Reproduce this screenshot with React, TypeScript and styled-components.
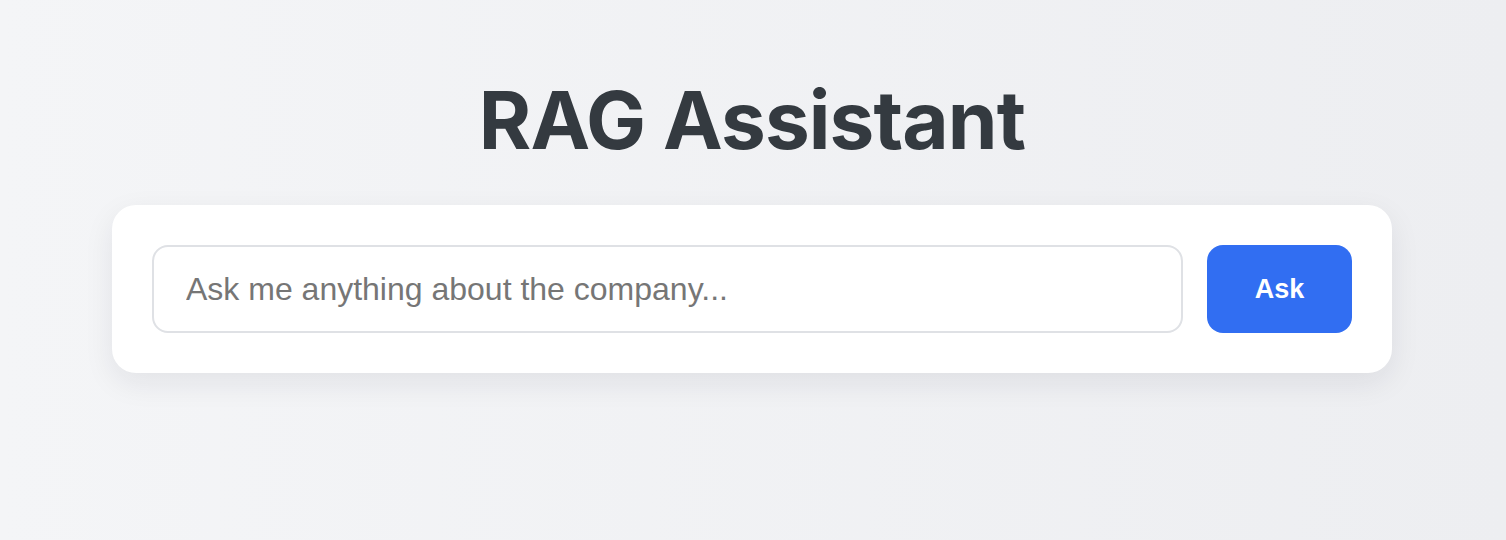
import React from "react";
import styled, { createGlobalStyle } from "styled-components";

const GlobalStyle = createGlobalStyle`
  html, body {
    margin: 0;
    padding: 0;
  }
  body {
    min-height: 540px;
    background: linear-gradient(90deg, #f4f5f7 0%, #edeef1 100%);
    font-family: "Liberation Sans", Arial, sans-serif;
  }
  * { box-sizing: border-box; }
`;

const Page = styled.main`
  display: flex;
  flex-direction: column;
  align-items: center;
  padding: 72px 114px 0 112px;
`;

const Title = styled.h1`
  margin: 0 0 37px;
  font-family: Inter, "Liberation Sans", sans-serif;
  font-weight: 700;
  font-size: 80px;
  line-height: 96px;
  letter-spacing: -0.9px;
  color: #343a40;
`;

const Card = styled.section`
  width: 100%;
  max-width: 1280px;
  background: #ffffff;
  border-radius: 24px;
  padding: 40px;
  box-shadow: 0 10px 30px rgba(20, 30, 50, 0.08);
  display: flex;
  gap: 24px;
`;

const Input = styled.input`
  flex: 1;
  height: 88px;
  border: 2px solid #dfe1e5;
  border-radius: 16px;
  padding: 0 32px;
  font-family: "Liberation Sans", Arial, sans-serif;
  font-size: 32px;
  color: #333;
  outline: none;
  background: #fff;
  &::placeholder {
    color: #767676;
  }
`;

const AskButton = styled.button`
  width: 145px;
  height: 88px;
  border: none;
  border-radius: 16px;
  background: #316ef2;
  color: #ffffff;
  font-family: "Liberation Sans", Arial, sans-serif;
  font-weight: 700;
  font-size: 27px;
  cursor: pointer;
`;

export default function App() {
  return (
    <>
      <GlobalStyle />
      <Page>
        <Title>RAG Assistant</Title>
        <Card>
          <Input placeholder="Ask me anything about the company..." />
          <AskButton>Ask</AskButton>
        </Card>
      </Page>
    </>
  );
}
